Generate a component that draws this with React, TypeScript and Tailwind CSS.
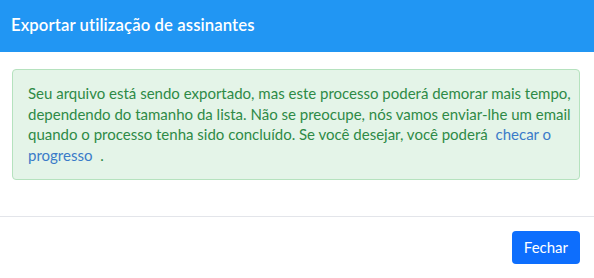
import React from "react";

export default function App() {
  return (
    <div className="w-[594px] h-[278px] bg-white font-['Lato','Noto_Sans',sans-serif]">
      {/* header */}
      <div className="h-[52px] bg-[#2196f3] flex items-center px-[11px]">
        <h1 className="text-white text-[16.7px] font-semibold tracking-[0.1px]">
          Exportar utilização de assinantes
        </h1>
      </div>

      {/* body */}
      <div className="h-[164px] pt-[17px] pl-[12px] pr-[14px]">
        <div className="rounded-[4px] border border-[#b5e2be] bg-[#e4f4e8] pl-[15px] pr-[4px] pt-[13px] pb-[14px] text-[15px] leading-[20.5px] text-[#2e8a46] whitespace-nowrap">
          Seu arquivo está sendo exportado, mas este processo poderá demorar mais tempo,
          <br />
          dependendo do tamanho da lista. Não se preocupe, nós vamos enviar-lhe um email
          <br />
          quando o processo tenha sido concluído. Se você desejar, você poderá{" "}
          <a className="px-[4px] text-[#3a7bc8]">checar o</a>
          <br />
          <a className="pr-[4px] text-[#3a7bc8]">progresso</a> .
        </div>
      </div>

      {/* footer */}
      <div className="border-t border-[#e3e5ea] h-[62px] flex items-center justify-end pr-[14px]">
        <button className="h-[33px] px-[12px] rounded-[4px] bg-[#0d6efd] text-white text-[15px]">
          Fechar
        </button>
      </div>
    </div>
  );
}
